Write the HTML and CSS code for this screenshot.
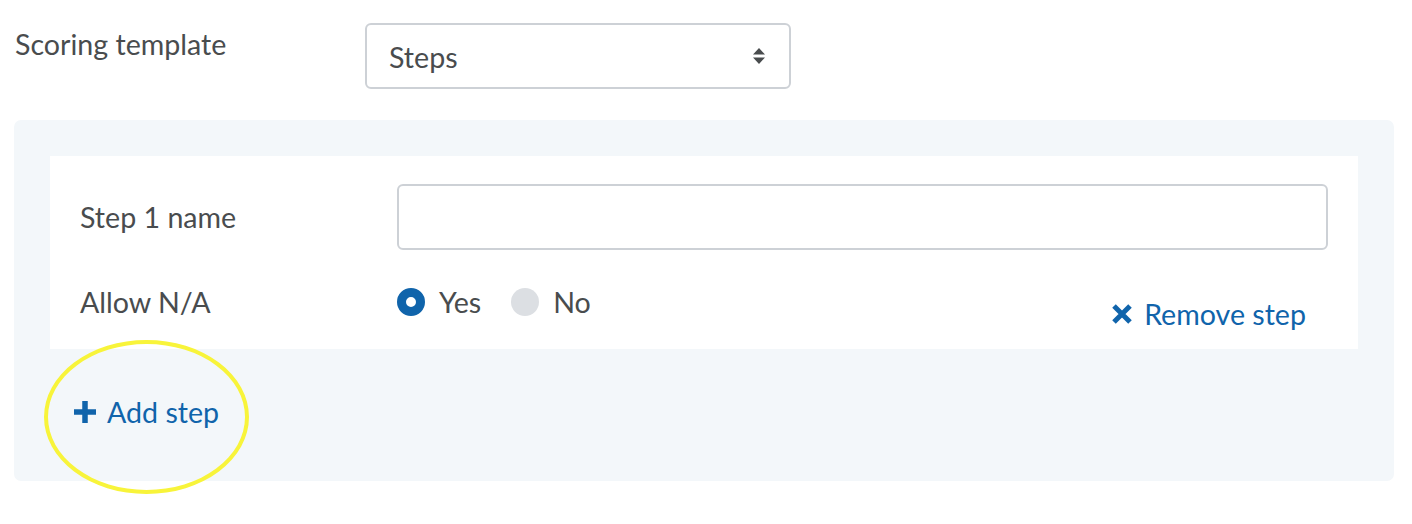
FILE: index.html
```html
<!DOCTYPE html>
<html lang="en">
<head>
  <meta charset="UTF-8" />
  <title>Scoring template</title>
  <link rel="stylesheet" href="styles.css">
</head>
<body>
  <div class="row top-row">
    <label class="row-label" for="template">Scoring template</label>
    <div class="select-box">
      <span>Steps</span>
      <svg class="select-arrows" width="14" height="18" viewBox="0 0 14 18">
        <path d="M7 1 L13 7.5 H1 Z M7 17 L13 10.5 H1 Z" fill="#494c4e"/>
      </svg>
    </div>
  </div>

  <div class="panel">
    <div class="step-card">
      <div class="row">
        <label class="step-label" for="step1">Step 1 name</label>
        <input class="text-input" type="text" id="step1" />
      </div>
      <div class="row na-row">
        <span class="step-label">Allow N/A</span>
        <div class="radios">
          <span class="radio checked"></span><span class="radio-text">Yes</span>
          <span class="radio"></span><span class="radio-text">No</span>
        </div>
        <a class="link remove-link" href="#">
          <svg width="22" height="20" viewBox="0 0 22 20">
            <path d="M3 2 L19 18 M19 2 L3 18" stroke="currentColor" stroke-width="5"/>
          </svg>
          Remove step
        </a>
      </div>
    </div>

    <div class="add-wrap">
      <a class="link add-link" href="#">
        <svg width="22" height="22" viewBox="0 0 22 22">
          <path d="M11 0 V22 M0 11 H22" stroke="currentColor" stroke-width="5.5"/>
        </svg>
        Add step
      </a>
    </div>
  </div>
  <span class="highlight"></span>
</body>
</html>
```

FILE: styles.css
```css
* {
  box-sizing: border-box;
}
body {
  margin: 0;
  position: relative;
  min-height: 524px;
  font-family: Lato, 'Open Sans', sans-serif;
  font-size: 28.6px;
  color: #494c4e;
  background-color: #fff;
}
.row {
  display: flex;
  align-items: center;
}
.top-row {
  align-items: flex-start;
  padding: 23px 0 0 15px;
}
.row-label {
  width: 350px;
  padding-top: 4px;
  line-height: 34px;
}
.select-box {
  width: 426px;
  height: 66px;
  border: 2px solid #cdd1d6;
  border-radius: 6px;
  display: flex;
  align-items: center;
  justify-content: space-between;
  padding: 0 23px 0 22px;
}
.select-box span {
  padding-top: 2px;
}
.panel {
  margin: 31px 0 0 14px;
  width: 1380px;
  height: 361px;
  background-color: #f3f7fa;
  border-radius: 7px;
  padding: 36px 36px 0;
}
.step-card {
  background-color: #fff;
  height: 193px;
  padding: 28px 30px 0;
}
.step-label {
  width: 317px;
}
.text-input {
  width: 931px;
  height: 66px;
  border: 2px solid #cdd1d6;
  border-radius: 6px;
  font: inherit;
}
.na-row {
  margin-top: 15px;
  height: 68px;
  align-items: flex-start;
  padding-top: 20px;
}
.radios {
  display: flex;
  align-items: center;
  gap: 14px;
}
.radio {
  width: 28px;
  height: 28px;
  border-radius: 50%;
  background-color: #dcdfe3;
}
.radio.checked {
  background-color: #fff;
  border: 9px solid #1064ab;
}
.radio-text {
  margin-right: 16px;
}
.link {
  color: #1064ab;
  text-decoration: none;
  display: flex;
  align-items: center;
  gap: 11px;
}
.remove-link {
  margin-left: auto;
  margin-right: 22px;
  margin-top: 12px;
}
.add-wrap {
  padding: 46px 0 0 24px;
}
.add-link {
  gap: 11px;
}
/* annotation circle drawn over the add link */
.highlight {
  position: absolute;
  left: 44px;
  top: 340px;
  width: 205px;
  height: 154px;
  border: 4px solid #f8f43a;
  border-radius: 50%;
}
```
